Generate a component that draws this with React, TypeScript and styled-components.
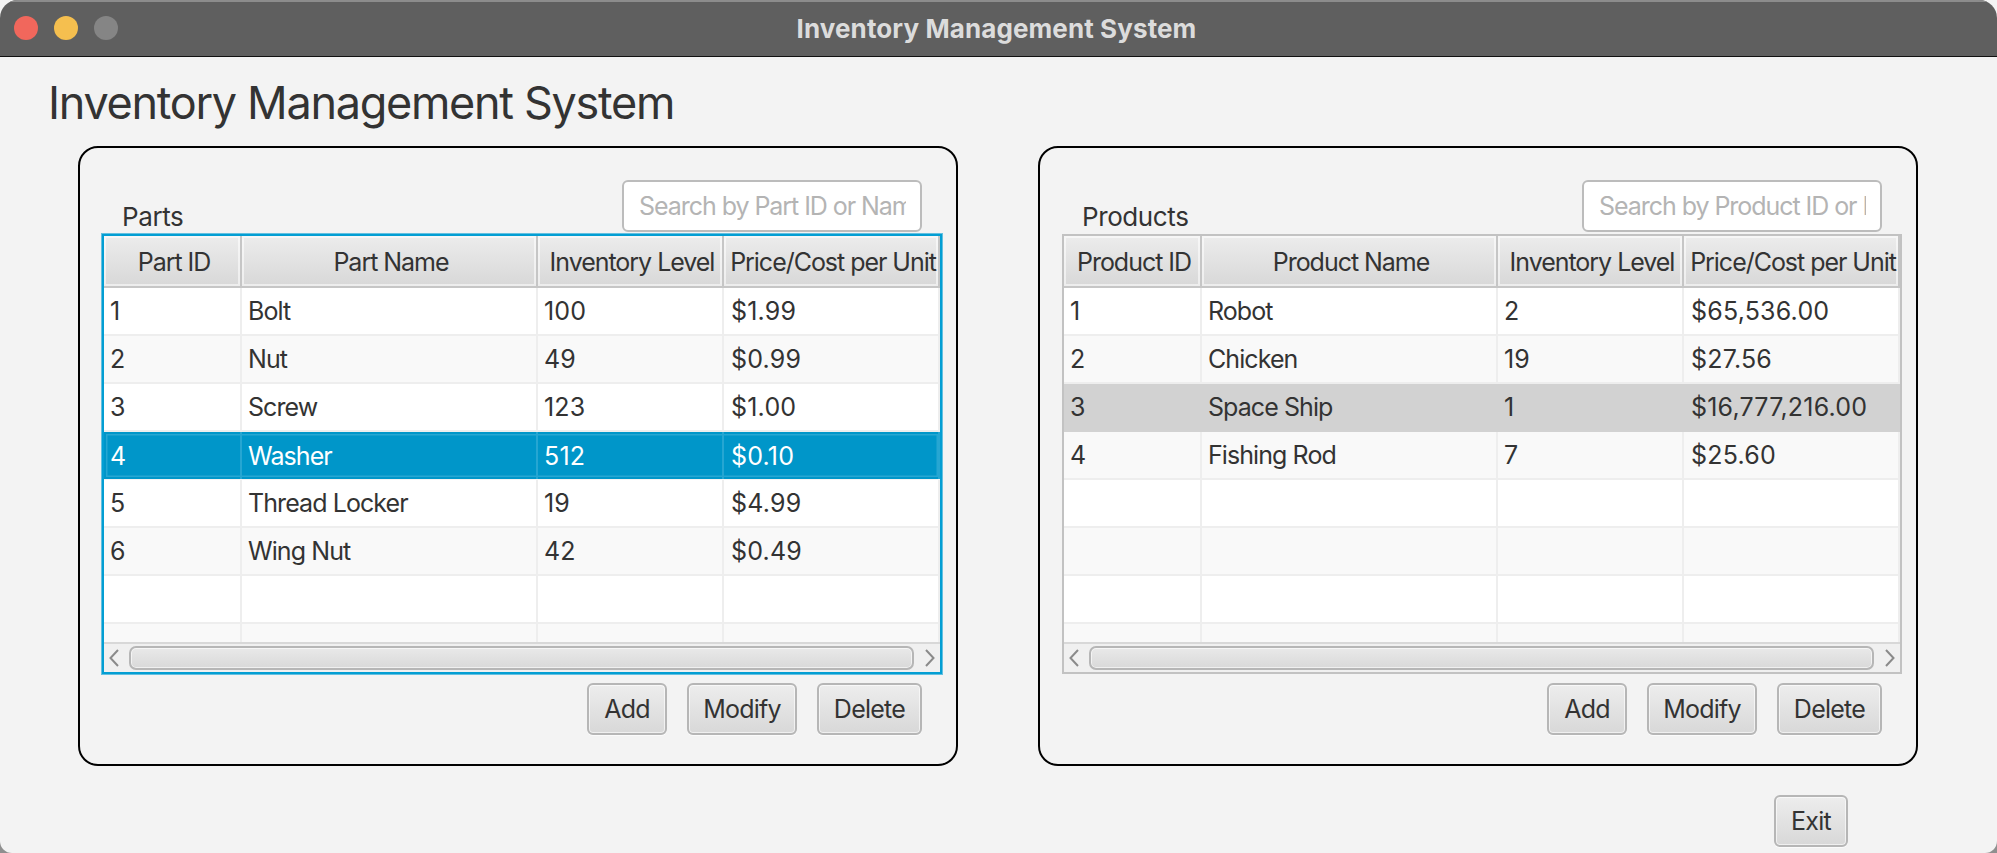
import React from 'react';
import styled, { createGlobalStyle } from 'styled-components';

const GlobalStyle = createGlobalStyle`
  html, body {
    margin: 0;
    padding: 0;
    width: 1997px;
    height: 853px;
    overflow: hidden;
    background: linear-gradient(#f4f4f4 0, #f4f4f4 50%, #8f8f8f 50%, #8f8f8f 100%);
  }
  * {
    box-sizing: border-box;
  }
`;

type Column = { title: string; width: string; numeric: boolean; inset: number };
type Row = string[];

const partColumns: Column[] = [
  { title: 'Part ID', width: '138px', numeric: true, inset: 6 },
  { title: 'Part Name', width: '296px', numeric: false, inset: 6 },
  { title: 'Inventory Level', width: '186px', numeric: true, inset: 6 },
  { title: 'Price/Cost per Unit', width: '216px', numeric: true, inset: 7 },
];

const productColumns: Column[] = [
  { title: 'Product ID', width: '138px', numeric: true, inset: 6 },
  { title: 'Product Name', width: '296px', numeric: false, inset: 6 },
  { title: 'Inventory Level', width: '186px', numeric: true, inset: 6 },
  { title: 'Price/Cost per Unit', width: '216px', numeric: true, inset: 7 },
];

const parts: Row[] = [
  ['1', 'Bolt', '100', '$1.99'],
  ['2', 'Nut', '49', '$0.99'],
  ['3', 'Screw', '123', '$1.00'],
  ['4', 'Washer', '512', '$0.10'],
  ['5', 'Thread Locker', '19', '$4.99'],
  ['6', 'Wing Nut', '42', '$0.49'],
];

const products: Row[] = [
  ['1', 'Robot', '2', '$65,536.00'],
  ['2', 'Chicken', '19', '$27.56'],
  ['3', 'Space Ship', '1', '$16,777,216.00'],
  ['4', 'Fishing Rod', '7', '$25.60'],
];

const EMPTY_ROW: Row = ['', '', '', ''];

const DataTable = ({
  columns,
  rows,
  selected,
  focused,
}: {
  columns: Column[];
  rows: Row[];
  selected: number;
  focused?: boolean;
}) => {
  const template = columns.map((c) => c.width).join(' ');
  const filled = [...rows, ...Array(8 - rows.length).fill(EMPTY_ROW)] as Row[];

  return (
    <TableShell $focused={focused}>
      <HeaderRow $template={template}>
        {columns.map((c) => (
          <HeaderCell key={c.title}>{c.title}</HeaderCell>
        ))}
      </HeaderRow>
      <RowsViewport>
        {filled.map((row, i) => (
          <BodyRow
            key={i}
            $template={template}
            $odd={i % 2 === 1}
            $state={i === selected ? (focused ? 'active' : 'inactive') : 'none'}
          >
            {row.map((value, j) => (
              <BodyCell key={j} $numeric={columns[j].numeric} $inset={columns[j].inset}>
                {value}
              </BodyCell>
            ))}
          </BodyRow>
        ))}
      </RowsViewport>
      <ScrollBar>
        <ScrollArrow viewBox="0 0 10 18" aria-hidden="true">
          <path d="M9 1 L1.5 9 L9 17" />
        </ScrollArrow>
        <ScrollThumb />
        <ScrollArrow viewBox="0 0 10 18" aria-hidden="true">
          <path d="M1 1 L8.5 9 L1 17" />
        </ScrollArrow>
      </ScrollBar>
    </TableShell>
  );
};

const Section = ({
  label,
  placeholder,
  columns,
  rows,
  selected,
  focused,
}: {
  label: string;
  placeholder: string;
  columns: Column[];
  rows: Row[];
  selected: number;
  focused?: boolean;
}) => (
  <Panel>
    <PanelHead>
      <PanelLabel>{label}</PanelLabel>
      <SearchBox readOnly placeholder={placeholder} />
    </PanelHead>
    <DataTable columns={columns} rows={rows} selected={selected} focused={focused} />
    <Actions>
      <Button $width={80}>Add</Button>
      <Button $width={110}>Modify</Button>
      <Button $width={105}>Delete</Button>
    </Actions>
  </Panel>
);

const App = () => (
  <>
    <GlobalStyle />
    <Window>
      <TitleBar>
        <Lights>
          <Light $color="#f1675c" />
          <Light $color="#f5bf4f" />
          <Light $color="#858585" />
        </Lights>
        <WindowTitle>Inventory Management System</WindowTitle>
      </TitleBar>
      <PageTitle>Inventory Management System</PageTitle>
      <Panels>
        <Section
          label="Parts"
          placeholder="Search by Part ID or Name"
          columns={partColumns}
          rows={parts}
          selected={3}
          focused
        />
        <Section
          label="Products"
          placeholder="Search by Product ID or Name"
          columns={productColumns}
          rows={products}
          selected={2}
        />
      </Panels>
      <Footer>
        <Button $width={74}>Exit</Button>
      </Footer>
    </Window>
  </>
);

const Window = styled.div`
  width: 1997px;
  height: 853px;
  display: flex;
  flex-direction: column;
  overflow: hidden;

  border-radius: 18px 18px 12px 12px;
  background-color: #f3f3f3;
  font-family: Inter, 'Noto Sans', 'Liberation Sans', sans-serif;
  color: #333333;
`;

const TitleBar = styled.div`
  position: relative;
  flex: 0 0 57px;
  display: flex;
  align-items: center;
  justify-content: center;
  padding-right: 4px;

  background-color: #5f5f5f;
  border-top: 2px solid #8c8c8c;
  border-bottom: 1px solid #111111;
`;

const Lights = styled.div`
  position: absolute;
  left: 14px;
  top: 14px;
  display: flex;
  gap: 16px;
`;

const Light = styled.span<{ $color: string }>`
  width: 24px;
  height: 24px;
  border-radius: 50%;
  background-color: ${(p) => p.$color};
`;

const WindowTitle = styled.div`
  margin-top: -2px;
  font-size: 26px;
  font-weight: 700;
  letter-spacing: 0.1px;
  color: #dcdcdc;
`;

const PageTitle = styled.h1`
  flex: 0 0 89px;
  margin: 0;
  padding: 18px 0 0 48px;
  font-size: 45px;
  line-height: 56px;
  font-weight: 400;
  letter-spacing: -1.3px;
  color: #333333;
`;

const Panels = styled.div`
  display: flex;
  gap: 80px;
  padding-left: 78px;
`;

const Panel = styled.section`
  width: 880px;
  height: 620px;
  padding: 0 14px 0 22px;

  border: 2px solid #000000;
  border-radius: 20px;
`;

const PanelHead = styled.div`
  height: 86px;
  display: flex;
  justify-content: space-between;
  align-items: flex-end;
  padding: 0 20px 2px 20px;
`;

const PanelLabel = styled.div`
  font-size: 26px;
  line-height: 30px;
  letter-spacing: -0.4px;
  color: #333333;
`;

const SearchBox = styled.input`
  width: 300px;
  height: 52px;
  padding: 0 14px 0 15px;

  font-family: inherit;
  font-size: 25px;
  letter-spacing: -1.05px;
  background-color: #ffffff;
  border: 2px solid #bcbcbc;
  border-radius: 6px;
  outline: none;

  &::placeholder {
    color: #b4b4b4;
    opacity: 1;
  }
`;

const TableShell = styled.div<{ $focused?: boolean }>`
  width: 840px;
  height: 440px;
  display: flex;
  flex-direction: column;
  overflow: hidden;

  border: 2px solid ${(p) => (p.$focused ? '#039ed3' : '#c2c2c2')};
  box-shadow: ${(p) => (p.$focused ? '0 0 0 1px rgba(3, 158, 211, 0.6)' : 'none')};
  background-color: #ffffff;
`;

const HeaderRow = styled.div<{ $template: string }>`
  flex: 0 0 52px;
  display: grid;
  grid-template-columns: ${(p) => p.$template};
  border-bottom: 2px solid #c6c6c6;
`;

const HeaderCell = styled.div`
  display: flex;
  align-items: center;
  justify-content: center;
  padding: 1px 0 0 4px;
  white-space: nowrap;
  overflow: hidden;

  font-size: 25px;
  letter-spacing: -1.03px;
  color: #333333;
  background: linear-gradient(#ececec, #d8d8d8);
  border-right: 2px solid #c6c6c6;
  box-shadow: inset 0 0 0 2px rgba(255, 255, 255, 0.55);
`;

const RowsViewport = styled.div`
  flex: 1;
  min-height: 0;
  overflow: hidden;
`;

const stateColors = {
  active: { bg: '#0096c9', fg: '#ffffff', line: '#26a6d2', bottom: '#f4f4f4' },
  inactive: { bg: '#d2d2d2', fg: '#333333', line: '#d2d2d2', bottom: '#d2d2d2' },
  none: { bg: '', fg: '#333333', line: '#eeeeee', bottom: '#eeeeee' },
};

const BodyRow = styled.div<{
  $template: string;
  $odd: boolean;
  $state: 'active' | 'inactive' | 'none';
}>`
  height: 48px;
  display: grid;
  grid-template-columns: ${(p) => p.$template};

  color: ${(p) => stateColors[p.$state].fg};
  background-color: ${(p) => stateColors[p.$state].bg || (p.$odd ? '#f9f9f9' : '#ffffff')};
  border-bottom: ${(p) => (p.$state === 'active' ? 1 : 2)}px solid ${(p) => stateColors[p.$state].bottom};
  box-shadow: ${(p) =>
    p.$state === 'active' ? 'inset 0 0 0 2px #0096c9, inset 0 0 0 3.5px #26a6d2' : 'none'};

  & > div {
    border-right-color: ${(p) => stateColors[p.$state].line};
  }
`;

const BodyCell = styled.div<{ $numeric: boolean; $inset: number }>`
  display: flex;
  align-items: center;
  padding: 0 ${(p) => p.$inset}px;
  white-space: nowrap;
  overflow: hidden;

  font-size: 25px;
  letter-spacing: ${(p) => (p.$numeric ? '0.2px' : '-0.92px')};
  border-right: 2px solid #eeeeee;
`;

const ScrollBar = styled.div`
  flex: 0 0 30px;
  display: flex;
  align-items: center;
  gap: 10px;
  padding: 0 5px 0 5px;

  background-color: #f0f0f0;
  border-top: 2px solid #d8d8d8;
`;

const ScrollArrow = styled.svg`
  flex: 0 0 10px;
  width: 10px;
  height: 18px;

  & path {
    fill: none;
    stroke: #8a8a8a;
    stroke-width: 2;
  }
`;

const ScrollThumb = styled.div`
  flex: 1;
  height: 24px;
  margin-right: 1px;

  background: linear-gradient(#e9e9e9, #d9d9d9);
  border: 2px solid #b6b6b6;
  border-radius: 7px;
  box-shadow: inset 0 0 0 1px rgba(255, 255, 255, 0.6);
`;

const Actions = styled.div`
  display: flex;
  justify-content: flex-end;
  gap: 20px;
  margin-top: 9px;
  padding-right: 20px;
`;

const Button = styled.div<{ $width: number }>`
  width: ${(p) => p.$width}px;
  height: 52px;
  display: flex;
  align-items: center;
  justify-content: center;

  font-size: 25px;
  letter-spacing: -0.75px;
  color: #333333;
  background: linear-gradient(#ededed, #d8d8d8);
  border: 2px solid #b6b6b6;
  border-radius: 6px;
  box-shadow: inset 0 0 0 1px rgba(255, 255, 255, 0.6), 0 1px 0 #fbfbfb;
`;

const Footer = styled.div`
  display: flex;
  justify-content: flex-end;
  padding: 29px 149px 0 0;
`;

export default App;
